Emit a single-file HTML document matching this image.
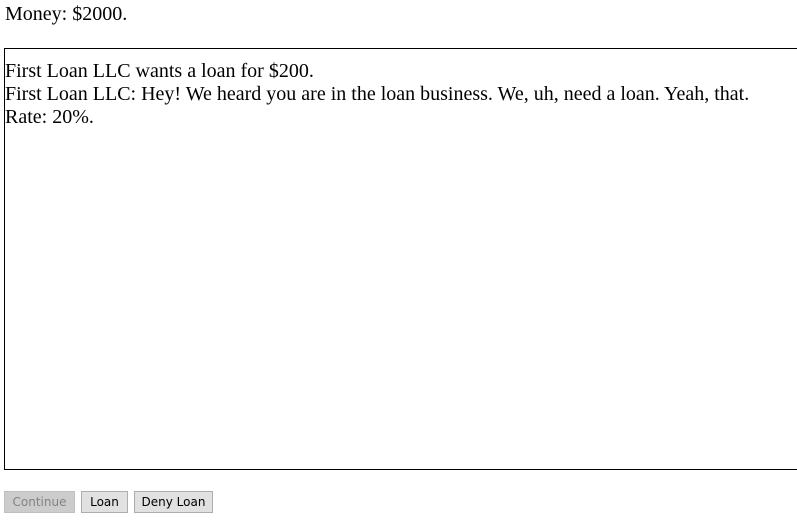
<!DOCTYPE html>
<html><head><style>
body{margin:0;background:#fff;font-family:"Liberation Serif",serif;font-size:20px;color:#000;}
#m{position:absolute;left:5px;top:3px;line-height:23px;}
#box{position:absolute;left:4px;top:48px;width:820px;height:422px;border:1px solid #000;box-sizing:border-box;padding:11px 0 0 0;line-height:23px;}
.b{position:absolute;top:491px;height:22px;box-sizing:border-box;border:1px solid #adadad;background:#e1e1e1;font-family:"DejaVu Sans","Liberation Sans",sans-serif;font-size:12px;line-height:21px;text-align:center;color:#000;}
</style></head><body>
<div id="m">Money: $2000.</div>
<div id="box">First Loan LLC wants a loan for $200.<br>First Loan LLC: Hey! We heard you are in the loan business. We, uh, need a loan. Yeah, that.<br>Rate: 20%.</div>
<div class="b" style="left:4px;width:71px;background:#ccc;border-color:#bfbfbf;color:#838383">Continue</div>
<div class="b" style="left:81px;width:47px">Loan</div>
<div class="b" style="left:134px;width:79px">Deny Loan</div>
</body></html>
